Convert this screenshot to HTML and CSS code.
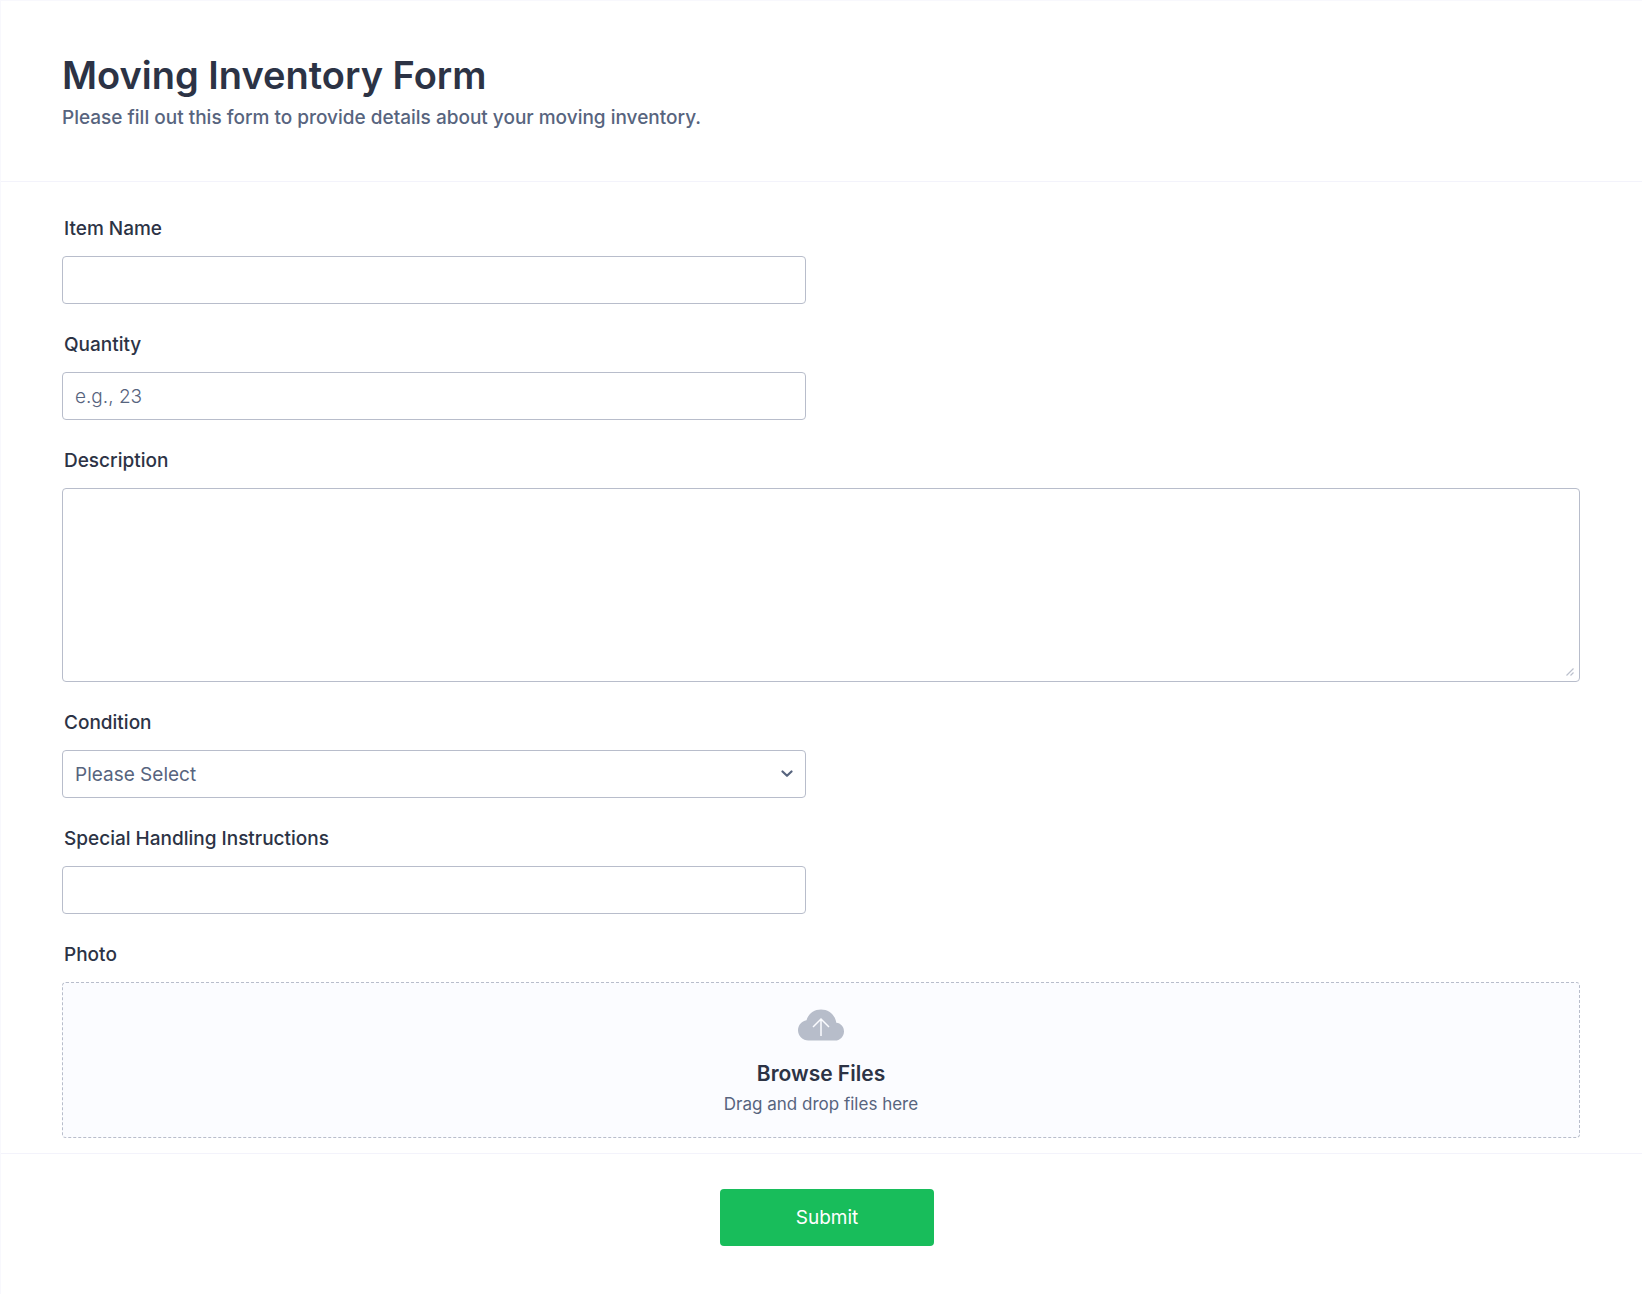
FILE: index.html
```html
<!DOCTYPE html>
<html lang="en">
<head>
  <meta charset="UTF-8">
  <meta name="viewport" content="width=device-width, initial-scale=1.0">
  <title>Moving Inventory Form</title>
  <link rel="stylesheet" href="styles.css">
</head>
<body>
  <form class="form">
    <header class="form-header">
      <h1>Moving Inventory Form</h1>
      <p>Please fill out this form to provide details about your moving inventory.</p>
    </header>

    <div class="form-fields">
      <div class="field">
        <label for="itemName">Item Name</label>
        <input class="control" type="text" id="itemName" name="itemName">
      </div>

      <div class="field">
        <label for="quantity">Quantity</label>
        <input class="control" type="number" id="quantity" name="quantity" placeholder="e.g., 23">
      </div>

      <div class="field field-wide">
        <label for="description">Description</label>
        <div class="control-wrap">
          <textarea class="control" id="description" name="description"></textarea>
          <svg class="grip" viewBox="0 0 8 8" aria-hidden="true">
            <path d="M.5 7.500l7-7M4.500 7.500l3-3" fill="none" stroke="#bcc1cd" stroke-width="1.200"/>
          </svg>
        </div>
      </div>

      <div class="field">
        <label for="condition">Condition</label>
        <div class="control-wrap">
          <select class="control" id="condition" name="condition">
            <option value="">Please Select</option>
          </select>
          <svg class="chevron" viewBox="0 0 12 8" aria-hidden="true">
            <path d="M1.500 1.500 6 5.800l4.500-4.300" fill="none" stroke="#57647e" stroke-width="2.200" stroke-linecap="round" stroke-linejoin="round"/>
          </svg>
        </div>
      </div>

      <div class="field">
        <label for="instructions">Special Handling Instructions</label>
        <input class="control" type="text" id="instructions" name="instructions">
      </div>

      <div class="field field-wide">
        <label for="photo">Photo</label>
        <!-- The file input is hidden, the drop area opens it -->
        <label class="upload" for="photo">
          <svg class="upload-icon" viewBox="0 0 46 32" aria-hidden="true">
            <path d="M10.500 31.500C4.700 31.500 0 27 0 21.300 0 16.200 3.600 12 8.500 11.200 10.300 4.800 16 .5 23 .5c8 0 14.300 5.700 15.300 13.300 4.400.4 7.700 4 7.700 8.600 0 5.100-4 9.100-9.100 9.100z" fill="#b7bdca"/>
            <path d="M23 27V10M15 18l8-8 8 8" fill="none" stroke="#fbfcff" stroke-width="1.500"/>
          </svg>
          <span class="upload-title">Browse Files</span>
          <span class="upload-text">Drag and drop files here</span>
        </label>
        <input class="upload-input" type="file" id="photo" name="photo">
      </div>
    </div>

    <div class="form-footer">
      <button class="submit-button" type="submit">Submit</button>
    </div>
  </form>
</body>
</html>
```
FILE: styles.css
```css
* {
  box-sizing: border-box;
}
body {
  margin: 0;
  background-color: #fff;
  color: #2c3345;
  font-family: Inter, "Liberation Sans", sans-serif;
  font-size: 19px;
}
.form {
  min-height: 100vh;
  border: 1px solid #f8f8fd;
  border-right: none;
  border-bottom: none;
}
.form-header {
  padding: 49px 61px 50px;
  border-bottom: 1px solid #f3f3fb;
}
.form-header h1 {
  margin: 0;
  font-size: 38px;
  font-weight: 600;
  line-height: 50px;
}
.form-header p {
  margin: 5px 0 0;
  color: #57647e;
  font-weight: 500;
  line-height: 26px;
}

/* Fields */
.form-fields {
  display: flex;
  flex-direction: column;
  gap: 28px;
  padding: 34px 62px 15px 61px;
}
.field {
  display: flex;
  flex-direction: column;
  gap: 15px;
  width: 49%;
}
.field-wide {
  width: 100%;
}
.field label:first-child {
  padding-left: 2px;
  font-weight: 500;
  line-height: 25px;
}
.control {
  display: block;
  width: 100%;
  height: 48px;
  padding: 0 12px;
  border: 1px solid #b8bdcb;
  border-radius: 4px;
  background-color: #fff;
  color: #57647e;
  font-family: inherit;
  font-size: 19px;
}
.control::placeholder {
  color: #57647e;
  font-weight: 300;
}
input[type="number"] {
  appearance: textfield;
}
.control-wrap {
  position: relative;
}
textarea.control {
  height: 194px;
  padding: 12px;
  resize: vertical;
}
textarea.control::-webkit-resizer {
  background-color: transparent;
}
.grip {
  position: absolute;
  right: 6px;
  bottom: 6px;
  width: 8px;
  height: 8px;
  pointer-events: none;
}
select.control {
  appearance: none;
}
.chevron {
  position: absolute;
  top: 20px;
  right: 13px;
  width: 12px;
  height: 8px;
  pointer-events: none;
}

/* Upload area */
.upload {
  display: flex;
  flex-direction: column;
  align-items: center;
  height: 156px;
  padding-top: 26px;
  border: 1px dashed #b8bdcb;
  border-radius: 4px;
  background-color: #fbfcff;
  cursor: pointer;
}
.upload-icon {
  width: 46px;
  height: 32px;
}
.upload-title {
  margin-top: 19px;
  font-size: 21px;
  font-weight: 600;
  line-height: 28px;
}
.upload-text {
  margin-top: 5px;
  color: #57647e;
  font-size: 17px;
  line-height: 22px;
}
.upload-input {
  display: none;
}

/* Footer */
.form-footer {
  display: flex;
  justify-content: center;
  padding: 35px 50px 46px 61px;
  border-top: 1px solid #f3f3fb;
}
.submit-button {
  width: 214px;
  height: 57px;
  border: none;
  border-radius: 4px;
  background-color: #18bd5b;
  color: #fff;
  font-family: inherit;
  font-size: 19px;
  cursor: pointer;
}
```
